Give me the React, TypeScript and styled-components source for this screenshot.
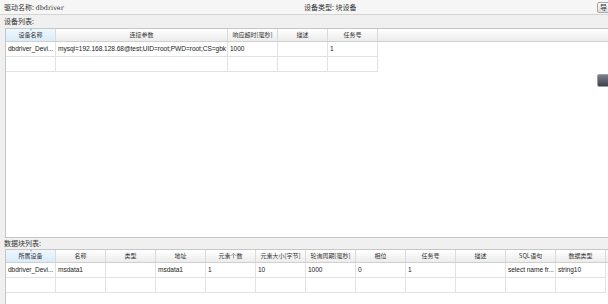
import React from "react";
import styled, { createGlobalStyle } from "styled-components";

type Column = { title: string; width: number };

const deviceColumns: Column[] = [
  { title: "设备名称", width: 50 },
  { title: "连接参数", width: 172 },
  { title: "响应超时[毫秒]", width: 50 },
  { title: "描述", width: 50 },
  { title: "任务号", width: 50 },
];

const deviceRows: string[][] = [
  ["dbdriver_Devi...", "mysql=192.168.128.68@test;UID=root;PWD=root;CS=gbk", "1000", "", "1"],
  ["", "", "", "", ""],
];

const blockColumns: Column[] = [
  "所属设备", "名称", "类型", "地址", "元素个数", "元素大小[字节]",
  "轮询周期[毫秒]", "相位", "任务号", "描述", "SQL语句", "数据类型",
].map((title) => ({ title, width: 50 }));

const blockRows: string[][] = [
  ["dbdriver_Devi...", "msdata1", "", "msdata1", "1", "10", "1000", "0", "1", "", "select name fr...", "string10"],
  Array(12).fill(""),
];

const GlobalStyle = createGlobalStyle`
  html, body {
    margin: 0;
    padding: 0;
    width: 608px;
    height: 304px;
    overflow: hidden;
    background: #f0f0f0;
    font-family: "Noto Sans CJK SC", "Liberation Sans", sans-serif;
    color: #222;
  }
`;

const Page = styled.div`
  display: flex;
  flex-direction: column;
  width: 608px;
  height: 304px;
  overflow: hidden;
`;

const TopBar = styled.div`
  display: flex;
  align-items: center;
  height: 14px;
  flex-shrink: 0;
  background: #f6f6f6;
  border-bottom: 1px solid #d4d4d4;
  font-size: 7px;
  color: #333;
`;

const Info = styled.div<{ $width: number }>`
  width: ${({ $width }) => $width}px;
  padding-left: 4px;
  white-space: nowrap;
`;

const Mono = styled.span`
  font-family: "DejaVu Serif", "Liberation Serif", serif;
  font-size: 6.5px;
`;

const TopButton = styled.button`
  margin-left: auto;
  margin-right: -3px;
  width: 14px;
  height: 11px;
  padding: 0 0 0 2px;
  border: 1px solid #a8a8a8;
  border-radius: 2px;
  background: linear-gradient(#fafafa, #dcdcdc);
  font-family: inherit;
  font-size: 7px;
  line-height: 9px;
  text-align: left;
  color: #333;
  overflow: hidden;
`;

const SectionLabel = styled.div<{ $height: number }>`
  height: ${({ $height }) => $height}px;
  line-height: ${({ $height }) => $height}px;
  flex-shrink: 0;
  padding-left: 4px;
  font-size: 7px;
  color: #333;
`;

const Panel = styled.div<{ $height: number; $open?: boolean }>`
  position: relative;
  margin-left: 5px;
  margin-right: -10px;
  height: ${({ $height }) => $height}px;
  flex-shrink: 0;
  background: #fff;
  border: 1px solid #c6c6c6;
  border-bottom: ${({ $open }) => ($open ? "none" : "1px solid #c6c6c6")};
`;

const HeaderRow = styled.div`
  display: flex;
  height: 12px;
  background: linear-gradient(#ffffff, #ececec);
  border-bottom: 1px solid #cfcfcf;
`;

const HeaderCell = styled.div<{ $width: number; $sorted?: boolean }>`
  position: relative;
  width: ${({ $width }) => $width}px;
  flex-shrink: 0;
  box-sizing: border-box;
  border-right: 1px solid #dadada;
  font-size: 6px;
  line-height: 12px;
  text-align: center;
  color: #333;
  white-space: nowrap;
  overflow: hidden;
  background: ${({ $sorted }) => ($sorted ? "linear-gradient(#eef7fd, #d9ecf9)" : "transparent")};
`;

const SortMark = styled.span`
  position: absolute;
  left: 50%;
  top: 0;
  margin-left: -1px;
  width: 0;
  height: 0;
  border-left: 1.5px solid transparent;
  border-right: 1.5px solid transparent;
  border-top: 2px solid #8ab4d8;
`;

const Row = styled.div`
  display: flex;
  height: 15px;
`;

const Cell = styled.div<{ $width: number }>`
  width: ${({ $width }) => $width}px;
  flex-shrink: 0;
  box-sizing: border-box;
  border-right: 1px solid #e2e2e2;
  border-bottom: 1px solid #e2e2e2;
  padding-left: 2px;
  font-family: "Liberation Sans", "Noto Sans CJK SC", sans-serif;
  font-size: 6.6px;
  letter-spacing: -0.05px;
  line-height: 14px;
  color: #222;
  white-space: nowrap;
  overflow: hidden;
`;

const SideButton = styled.div`
  position: absolute;
  top: 45px;
  left: 591px;
  width: 16px;
  height: 11px;
  border-radius: 2px;
  background: linear-gradient(#7a7f88, #3e434b);
  border: 1px solid #9aa0a8;
`;

const Grid = ({ columns, rows }: { columns: Column[]; rows: string[][] }) => (
  <>
    <HeaderRow>
      {columns.map((c, i) => (
        <HeaderCell key={c.title} $width={c.width} $sorted={i === 0}>
          {i === 0 && <SortMark />}
          {c.title}
        </HeaderCell>
      ))}
    </HeaderRow>
    {rows.map((r, ri) => (
      <Row key={ri}>
        {columns.map((c, ci) => (
          <Cell key={ci} $width={c.width}>
            {r[ci]}
          </Cell>
        ))}
      </Row>
    ))}
  </>
);

const App = () => (
  <Page>
    <GlobalStyle />
    <TopBar>
      <Info $width={296}>
        驱动名称: <Mono>dbdriver</Mono>
      </Info>
      <Info $width={120}>设备类型: 块设备</Info>
      <TopButton>导</TopButton>
    </TopBar>
    <SectionLabel $height={13}>设备列表:</SectionLabel>
    <Panel $height={208}>
      <Grid columns={deviceColumns} rows={deviceRows} />
      <SideButton />
    </Panel>
    <SectionLabel $height={11}>数据块列表:</SectionLabel>
    <Panel $height={54} $open>
      <Grid columns={blockColumns} rows={blockRows} />
    </Panel>
  </Page>
);

export default App;
